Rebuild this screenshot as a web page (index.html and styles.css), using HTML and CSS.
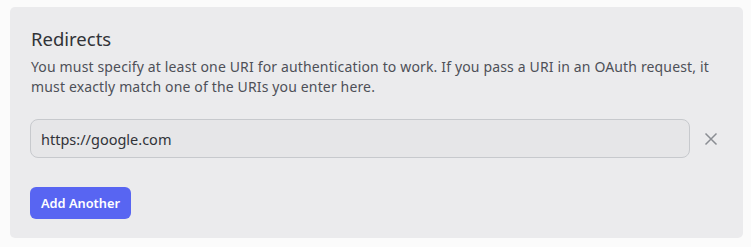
FILE: index.html
```html
<!DOCTYPE html>
<html>
<head>
<meta charset="utf-8">
<link rel="stylesheet" href="styles.css">
</head>
<body>
<section class="panel">
  <h2 class="title">Redirects</h2>
  <p class="desc">You must specify at least one URI for authentication to work. If you pass a URI in an OAuth request, it must exactly match one of the URIs you enter here.</p>
  <div class="row">
    <div class="input">https://google.com</div>
    <button class="remove" aria-label="Remove">
      <svg width="14" height="14" viewBox="0 0 14 14"><path d="M1.5 1.5 L12.5 12.5 M12.5 1.5 L1.5 12.5" stroke="#8a8d93" stroke-width="1.5" fill="none"/></svg>
    </button>
  </div>
  <button class="add">Add Another</button>
</section>
</body>
</html>
```
FILE: styles.css
```css
html, body { margin: 0; padding: 0; }
body {
  background: #fbfbfb;
  font-family: "Noto Sans", "Open Sans", sans-serif;
  padding: 7px 8px 8px 10px;
}
.panel {
  background: #ebebed;
  border-radius: 5px;
  padding: 20px 20px 20px 20px;
  height: 191px;
  width: 693px;
}
.title {
  margin: 0;
  font-size: 18.5px;
  font-weight: 400;
  color: #313338;
  line-height: 24px;
  padding-left: 1px;
}
.desc {
  margin: 6px 0 0 0;
  font-size: 14px;
  letter-spacing: 0.15px;
  line-height: 20px;
  color: #4e5058;
  padding-left: 1px;
}
.row {
  display: flex;
  align-items: center;
  margin-top: 22px;
}
.input {
  flex: 0 0 660px;
  box-sizing: border-box;
  height: 39px;
  border: 1px solid #c7c9cd;
  border-radius: 8px;
  background: #e6e6e8;
  padding: 0 10px;
  display: flex;
  align-items: center;
  font-size: 14.5px;
  color: #313338;
}
.remove {
  border: 0;
  background: none;
  padding: 0;
  margin-left: 14px;
  width: 14px;
  height: 14px;
  display: flex;
}
.add {
  margin-top: 29px;
  border: 0;
  background: #5865f2;
  color: #fff;
  font-family: inherit;
  font-size: 12.8px;
  font-weight: 600;
  border-radius: 6px;
  height: 32px;
  width: 101px;
  padding: 0;
}
```
